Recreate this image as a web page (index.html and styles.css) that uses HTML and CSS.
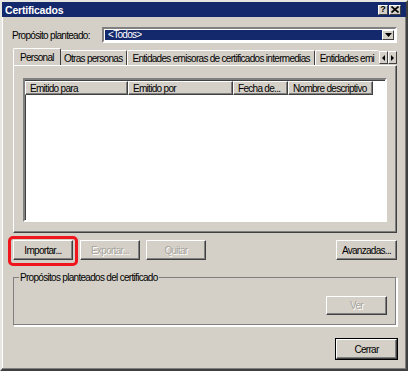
FILE: index.html
```html
<!DOCTYPE html>
<html lang="es">

<head>
   <meta charset="UTF-8">
   <title>Certificados</title>
   <link rel="stylesheet" href="styles.css">
</head>

<body>
   <div class="dialog">
      <div class="titlebar">
         <span class="title">Certificados</span>
         <div class="caption-buttons">
            <span class="cap-btn">?</span>
            <span class="cap-btn close">
               <svg width="8" height="7" viewBox="0 0 8 7">
                  <path d="M0.5 0.5 L7.5 6.5 M7.5 0.5 L0.5 6.5" stroke="#000" stroke-width="1.6" />
               </svg>
            </span>
         </div>
      </div>

      <div class="content">
         <div class="purpose">
            <label>Propósito planteado:</label>
            <div class="combo">
               <span class="combo-value">&lt;Todos&gt;</span>
               <span class="combo-arrow">
                  <svg width="7" height="4" viewBox="0 0 7 4"><path d="M0 0 H7 L3.5 4 Z" fill="#000" /></svg>
               </span>
            </div>
         </div>

         <div class="tabs">
            <div class="tab-strip">
               <span class="tab active">Personal</span>
               <span class="tab">Otras personas</span>
               <span class="tab">Entidades emisoras de certificados intermedias</span>
               <span class="tab tab-cut">Entidades emi</span>
            </div>
            <div class="tab-scroll">
               <span class="scroll-btn">
                  <svg width="3" height="6" viewBox="0 0 3 6"><path d="M3 0 V6 L0 3 Z" fill="#000" /></svg>
               </span>
               <span class="scroll-btn">
                  <svg width="3" height="6" viewBox="0 0 3 6"><path d="M0 0 V6 L3 3 Z" fill="#000" /></svg>
               </span>
            </div>
         </div>

         <div class="panel">
            <div class="list">
               <div class="list-header">
                  <span class="col col-para">Emitido para</span>
                  <span class="col col-por">Emitido por</span>
                  <span class="col col-fecha">Fecha de...</span>
                  <span class="col col-nombre">Nombre descriptivo</span>
               </div>
            </div>
         </div>

         <div class="actions">
            <div class="actions-left">
               <span class="highlight">
                  <button class="btn">Importar...</button>
               </span>
               <button class="btn" disabled>Exportar...</button>
               <button class="btn" disabled>Quitar</button>
            </div>
            <button class="btn">Avanzadas...</button>
         </div>

         <fieldset class="group">
            <legend>Propósitos planteados del certificado</legend>
            <div class="group-body">
               <button class="btn btn-ver" disabled>Ver</button>
            </div>
         </fieldset>

         <div class="footer">
            <button class="btn btn-default">Cerrar</button>
         </div>
      </div>
   </div>
</body>

</html>
```

FILE: styles.css
```css
body {
   margin: 0;
   background-color: #ffffff;
   font-family: "Liberation Sans", Arial, sans-serif;
   font-size: 10px;
   letter-spacing: -0.7px;
   color: #000;
}

.dialog {
   width: 408px;
   height: 371px;
   box-sizing: border-box;
   background-color: #d4d0c8;
   border: 2px solid;
   border-color: #e8e6e0 #404040 #404040 #e8e6e0;
   box-shadow: inset -1px -1px #808080, inset 1px 1px #ffffff;
}

/* Title bar */
.titlebar {
   height: 15px;
   background-color: #14286c;
   display: flex;
   align-items: center;
   justify-content: space-between;
   padding: 0 5px 0 3px;
}

.title {
   color: #fff;
   font-weight: bold;
   font-size: 10.5px;
   letter-spacing: -0.2px;
}

.caption-buttons {
   display: flex;
   gap: 1px;
}

.cap-btn {
   width: 10px;
   height: 10px;
   box-sizing: border-box;
   background-color: #d4d0c8;
   border: 1px solid;
   border-color: #fff #404040 #404040 #fff;
   display: flex;
   align-items: center;
   justify-content: center;
   font-weight: bold;
   font-size: 9px;
   letter-spacing: 0;
   line-height: 1;
}

.cap-btn.close {
   width: 12px;
}

.content {
   padding: 0 9px 0 11px;
}

/* Purpose row */
.purpose {
   display: flex;
   align-items: center;
   margin-top: 10px;
   height: 16px;
}

.purpose label {
   width: 90px;
   margin-left: -1px;
}

.combo {
   flex: 1;
   height: 16px;
   box-sizing: border-box;
   background-color: #fff;
   border: 2px solid;
   border-color: #808080 #fff #fff #808080;
   display: flex;
   padding: 1px;
}

.combo-value {
   flex: 1;
   background-color: #14286c;
   color: #fff;
   padding-left: 3px;
   line-height: 10px;
}

.combo-arrow {
   width: 12px;
   box-sizing: border-box;
   background-color: #d4d0c8;
   border: 1px solid;
   border-color: #fff #404040 #404040 #fff;
   display: flex;
   align-items: center;
   justify-content: center;
}

/* Tabs */
.tabs {
   display: flex;
   align-items: flex-end;
   margin-top: 5px;
   height: 17px;
   position: relative;
   z-index: 1;
}

.tab-strip {
   flex: 1;
   display: flex;
   align-items: flex-end;
   overflow: hidden;
   height: 17px;
   padding-left: 2px;
}

.tab {
   height: 15px;
   box-sizing: border-box;
   white-space: nowrap;
   padding: 2px 4px 0 4px;
   border: 1px solid;
   border-bottom: none;
   border-color: #fff #404040 #404040 #fff;
   border-radius: 2px 2px 0 0;
}

.tab.active {
   height: 18px;
   margin: 0 -2px -1px -2px;
   padding: 3px 6px 0 6px;
   background-color: #d4d0c8;
   position: relative;
   z-index: 2;
}

.tab-cut {
   flex: 1;
   border-right: none;
   padding-right: 0;
   overflow: hidden;
}

.tab-scroll {
   display: flex;
   margin-bottom: 1px;
}

.scroll-btn {
   width: 9px;
   height: 13px;
   box-sizing: border-box;
   background-color: #d4d0c8;
   border: 1px solid;
   border-color: #fff #404040 #404040 #fff;
   display: flex;
   align-items: center;
   justify-content: center;
}

/* Tab panel */
.panel {
   height: 168px;
   box-sizing: border-box;
   border: 1px solid;
   border-color: #fff #404040 #404040 #fff;
   box-shadow: inset -1px -1px #808080;
   padding: 12px 9px 10px 9px;
}

.list {
   height: 100%;
   box-sizing: border-box;
   background-color: #fff;
   border: 2px solid;
   border-color: #808080 #fff #fff #808080;
   box-shadow: inset 1px 1px #404040;
}

.list-header {
   display: flex;
   height: 14px;
   padding: 1px 0 0 0;
}

.col {
   box-sizing: border-box;
   height: 14px;
   background-color: #d4d0c8;
   border: 1px solid;
   border-color: #fff #404040 #404040 #fff;
   box-shadow: inset -1px -1px #808080;
   padding: 1px 0 0 4px;
   white-space: nowrap;
   overflow: hidden;
}

.col-para {
   width: 103px;
}

.col-por {
   width: 105px;
}

.col-fecha {
   width: 55px;
}

.col-nombre {
   width: 85px;
}

/* Buttons */
.actions {
   display: flex;
   justify-content: space-between;
   margin-top: 7px;
}

.actions-left {
   display: flex;
   gap: 6px;
}

.btn {
   font-family: inherit;
   font-size: inherit;
   letter-spacing: inherit;
   color: #000;
   width: 61px;
   height: 20px;
   padding: 0;
   background-color: #d4d0c8;
   border: 1px solid;
   border-color: #fff #404040 #404040 #fff;
   box-shadow: inset -1px -1px #808080;
}

.actions-left .btn {
   width: 60px;
}

.btn:disabled {
   color: #a8a49c;
   text-shadow: 1px 1px #fff;
}

/* red annotation around the import button */
.highlight {
   display: inline-flex;
   margin: -4px -4px -6px -5px;
   padding: 1px 2px 3px 2px;
   border: 3px solid #f0141c;
   border-radius: 5px;
}

/* Group box */
.group {
   margin: 12px 0 0 0;
   padding: 0;
   height: 54px;
   box-sizing: border-box;
   border: 1px solid;
   border-color: #808080 #fff #fff #808080;
   box-shadow: inset -1px -1px #808080, 1px 1px #fff;
}

.group legend {
   margin-left: 5px;
   padding: 0 1px;
}

.group-body {
   display: flex;
   justify-content: flex-end;
   padding: 13px 9px 0 0;
}

.btn-ver {
   height: 19px;
}

.footer {
   display: flex;
   justify-content: flex-end;
   margin-top: 13px;
}

.btn-default {
   outline: 1px solid #000;
}
```
